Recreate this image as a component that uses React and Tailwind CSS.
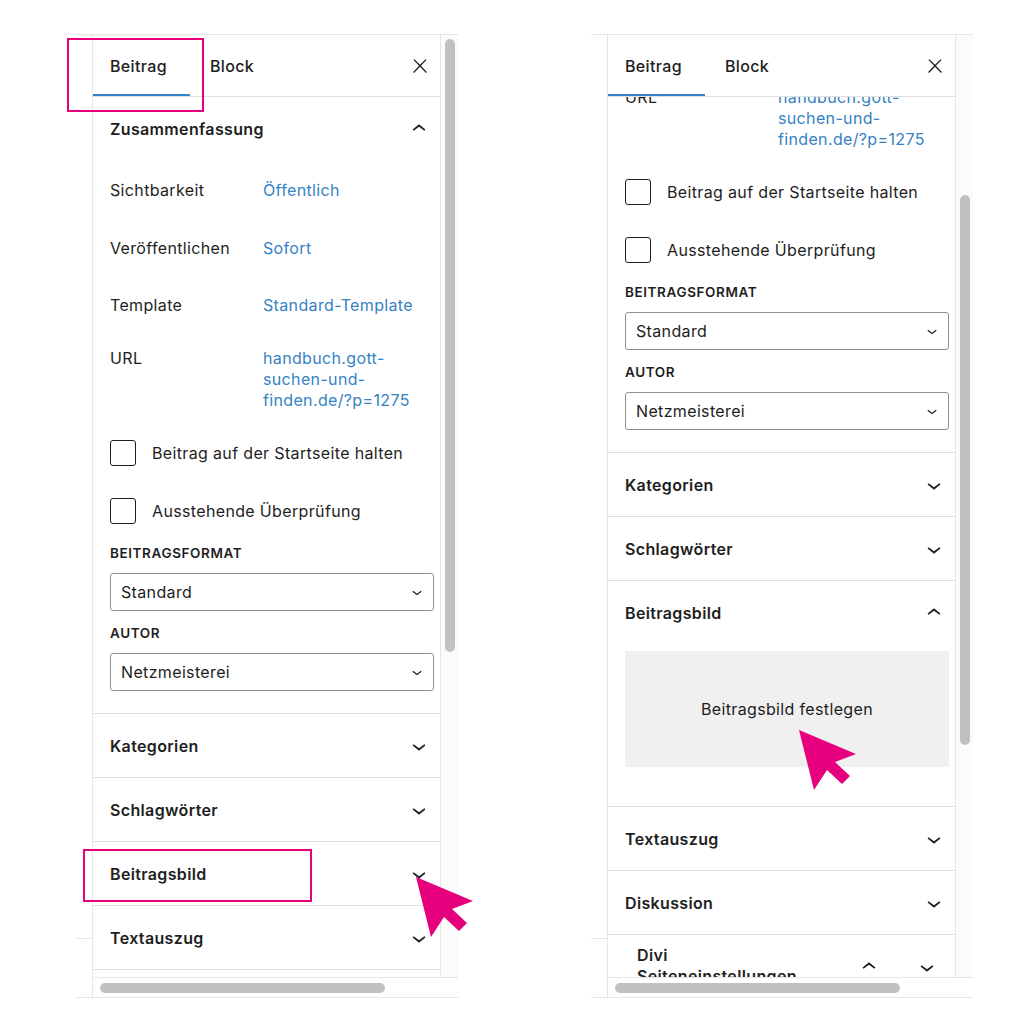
import React from 'react'

const DOWN = 'M17.5 11.6L12 16l-5.5-4.4.9-1.2L12 14l4.6-3.6 1 1.2z'
const UP = 'M6.5 12.4L12 8l5.5 4.4-.9 1.2L12 10l-4.6 3.6-1-1.2z'
const CLOSE = 'M13 11.8l6.1-6.3-1-1-6.1 6.2-6.1-6.2-1 1 6.1 6.3-6.5 6.7 1 1 6.5-6.6 6.5 6.6 1-1z'

const Icon = ({ d, size = 28 }) => (
    <svg width={size} height={size} viewBox="0 0 24 24" fill="#1e1e1e" className="shrink-0">
        <path d={d} />
    </svg>
)

const SectionHead = ({ title, up }) => (
    <div className="flex h-[63px] items-center justify-between pl-[17px] pr-[7px] font-semibold">
        <span>{title}</span>
        <Icon d={up ? UP : DOWN} />
    </div>
)

const Closed = ({ title }) => (
    <div className="border-b border-[#e0e0e0]">
        <SectionHead title={title} />
    </div>
)

const Row = ({ label, children, className }) => (
    <div className={'flex leading-[21px] ' + className}>
        <div className="w-[153px] shrink-0">{label}</div>
        <div className="text-[#3582c4]">{children}</div>
    </div>
)

const Check = ({ label, className }) => (
    <div className={'flex items-center gap-4 ' + className}>
        <div className="h-[26px] w-[26px] rounded-[3px] border-[1.5px] border-[#1e1e1e]"></div>
        <span>{label}</span>
    </div>
)

const Select = ({ value, className }) => (
    <div className={'flex h-[38px] items-center justify-between rounded-[3px] border border-[#8f8f8f] pl-[10px] pr-[6px] ' + className}>
        <span>{value}</span>
        <Icon d={DOWN} size={20} />
    </div>
)

const Cursor = ({ className }) => (
    <svg width="64" height="66" viewBox="0 0 64 66" className={'absolute ' + className}>
        <polygon points="2,2 59,26 38,34 53,48 45,56 30,42 17,62" fill="#e6007e" />
    </svg>
)

function Panel({ scroll, imageOpen, thumb, tail }) {
    return (
        <div className="flex h-[964px] w-[382px] border-y border-[#e6e6e6]">
            <div className="flex w-4 flex-col">
                <div className="h-[903px]"></div>
                <div className="border-t border-[#e6e6e6]"></div>
            </div>
            <div className="flex flex-1 flex-col border-l border-[#e6e6e6]">
                <div className="flex h-[942px]">
                    <div className="flex w-[348px] flex-col border-r border-[#e6e6e6]">
                        <div className="flex h-[62px] shrink-0 items-stretch border-b border-[#e0e0e0] pr-[9px] font-medium">
                            <div className="flex w-[97px] items-center pl-[17px] shadow-[inset_0_-2px_0_#3582c4]">Beitrag</div>
                            <div className="flex items-center pl-[20px]">Block</div>
                            <div className="ml-auto flex items-center">
                                <Icon d={CLOSE} size={22} />
                            </div>
                        </div>
                        <div className="flex-1 overflow-hidden">
                            <div className={scroll}>
                                <div className="border-b border-[#e0e0e0]">
                                    <SectionHead title="Zusammenfassung" up />
                                    <div className="flex flex-col pb-[22px] pl-[17px] pr-[6px]">
                                        <Row className="mt-[20px]" label="Sichtbarkeit">Öffentlich</Row>
                                        <Row className="mt-[37px]" label="Veröffentlichen">Sofort</Row>
                                        <Row className="mt-[36px]" label="Template">Standard-Template</Row>
                                        <Row className="mt-[32px]" label="URL">
                                            handbuch.gott-<br />suchen-und-<br />finden.de/?p=1275
                                        </Row>
                                        <Check className="mt-[29px]" label="Beitrag auf der Startseite halten" />
                                        <Check className="mt-[32px]" label="Ausstehende Überprüfung" />
                                        <div className="mt-[21px] text-[13.5px] font-semibold uppercase leading-4 tracking-[0.6px]">Beitragsformat</div>
                                        <Select className="mt-3" value="Standard" />
                                        <div className="mt-[14px] text-[13.5px] font-semibold uppercase leading-4 tracking-[0.6px]">Autor</div>
                                        <Select className="mt-3" value="Netzmeisterei" />
                                    </div>
                                </div>
                                <Closed title="Kategorien" />
                                <Closed title="Schlagwörter" />
                                {imageOpen ? (
                                    <div className="border-b border-[#e0e0e0]">
                                        <SectionHead title="Beitragsbild" up />
                                        <div className="pb-[39px] pl-[17px] pr-[6px] pt-[7px]">
                                            <div className="flex h-[116px] items-center justify-center rounded-[2px] bg-[#f0f0f0]">
                                                Beitragsbild festlegen
                                            </div>
                                        </div>
                                    </div>
                                ) : (
                                    <Closed title="Beitragsbild" />
                                )}
                                <Closed title="Textauszug" />
                                {tail && (
                                    <>
                                        <Closed title="Diskussion" />
                                        <div className="flex items-start pl-[29px] pr-[14px] pt-[10px]">
                                            <div className="w-[170px] font-semibold leading-[21px]">
                                                Divi<br />Seiteneinstellungen
                                            </div>
                                            <div className="ml-auto mt-[8px] flex gap-[30px]">
                                                <Icon d={UP} />
                                                <Icon d={DOWN} />
                                            </div>
                                        </div>
                                    </>
                                )}
                                <div className="h-[200px]"></div>
                            </div>
                        </div>
                    </div>
                    <div className="flex-1 bg-[#fbfbfb] pl-1">
                        <div className={'w-[10px] rounded-full bg-[#c1c1c1] ' + thumb}></div>
                    </div>
                </div>
                <div className="h-5 border-t border-[#e6e6e6] pl-[7px] pt-[5px]">
                    <div className="h-[10px] w-[285px] rounded-full bg-[#c1c1c1]"></div>
                </div>
            </div>
        </div>
    )
}

export default function App() {
    return (
        <div className="relative h-[1024px] w-[1024px] overflow-hidden bg-white font-['Inter','Noto_Sans',sans-serif] text-[16px] tracking-[0.35px] text-[#1e1e1e]">
            <div className="flex gap-[133px] pl-[76px] pt-[34px]">
                <Panel scroll="" imageOpen={false} thumb="mt-[4px] h-[613px]" />
                <Panel scroll="-mt-[261px]" imageOpen tail thumb="mt-[160px] h-[550px]" />
            </div>
            <div className="absolute left-[67px] top-[38px] h-[74px] w-[137px] border-2 border-[#e6007e]"></div>
            <div className="absolute left-[83px] top-[849px] h-[53px] w-[229px] border-2 border-[#e6007e]"></div>
            <Cursor className="left-[414px] top-[875px]" />
            <Cursor className="left-[797px] top-[728px]" />
        </div>
    )
}
